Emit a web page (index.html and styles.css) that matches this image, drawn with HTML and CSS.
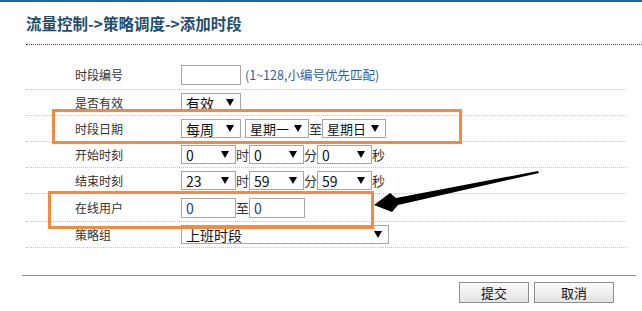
FILE: index.html
```html
<!DOCTYPE html>
<html lang="zh-CN">
<head>
    <meta charset="UTF-8">
    <title>添加时段</title>
    <link rel="stylesheet" href="styles.css">
</head>
<body>
<div class="page">
    <h1 class="title">流量控制-&gt;策略调度-&gt;添加时段</h1>

    <div class="form">
        <div class="row row_first">
            <span class="lab">时段编号</span>
            <span class="txt w60"></span>
            <span class="hint">(1~128,小编号优先匹配)</span>
        </div>
        <div class="row">
            <span class="lab">是否有效</span>
            <span class="sel w60">有效<i></i></span>
        </div>
        <div class="row">
            <span class="lab">时段日期</span>
            <span class="sel w60">每周<i></i></span>
            <span class="sel w64 ml4">星期一<i></i></span><span class="unit">至</span><span class="sel w64">星期日<i></i></span>
        </div>
        <div class="row">
            <span class="lab">开始时刻</span>
            <span class="sel w55">0<i></i></span><span class="unit">时</span><span class="sel w55">0<i></i></span><span class="unit">分</span><span class="sel w55">0<i></i></span><span class="unit">秒</span>
        </div>
        <div class="row">
            <span class="lab">结束时刻</span>
            <span class="sel w55">23<i></i></span><span class="unit">时</span><span class="sel w55">59<i></i></span><span class="unit">分</span><span class="sel w55">59<i></i></span><span class="unit">秒</span>
        </div>
        <div class="row row_user">
            <span class="lab">在线用户</span>
            <span class="txt w55">0</span><span class="unit">至</span><span class="txt w56">0</span>
        </div>
        <div class="row">
            <span class="lab">策略组</span>
            <span class="sel w208">上班时段<i></i></span>
        </div>
    </div>

    <div class="foot">
        <button class="btn btn_ok">提交</button>
        <button class="btn btn_cancel">取消</button>
    </div>

    <!-- 标注 -->
    <div class="mark mark_date"></div>
    <div class="mark mark_user"></div>
    <svg class="arrow" width="175" height="50" viewBox="0 0 175 50">
        <polygon points="168,4 26,31 20,26 4,38 22,45 28,38 169,6" fill="#000"/>
    </svg>
</div>
</body>
</html>
```

FILE: styles.css
```css
body {
    margin: 0;
    background: #fff;
    font-family: "Noto Sans CJK SC", "Liberation Sans", sans-serif;
    color: #333;
}
.page {
    position: relative;
    width: 642px;
    height: 311px;
    border-top: 2px solid #1b6b96;
    box-sizing: border-box;
}
.title {
    margin: 0 0 0 26px;
    padding: 11px 0 11px;
    height: 20px;
    line-height: 20px;
    font-size: 15.5px;
    font-weight: bold;
    color: #234d6d;
    border-bottom: 1px dotted #234d6d;
}
.form {
    margin: 15px 0 0 26px;
    width: 600px;
}
.row {
    display: flex;
    align-items: center;
    height: 26px;
    border-bottom: 1px dotted #c4c4c4;
    box-sizing: border-box;
    font-size: 13px;
}
.row_first {
    height: 30px;
}
.row_user {
    height: 28px;
}
.lab {
    width: 155px;
    padding-left: 49px;
    box-sizing: border-box;
    font-size: 12px;
    color: #333;
}
.txt, .sel {
    display: flex;
    align-items: center;
    flex-shrink: 0;
    height: 20px;
    border: 1px solid #a6a6a6;
    box-sizing: border-box;
    background: #fff;
    font-size: 14px;
    padding-left: 4px;
    color: #111;
    white-space: nowrap;
    overflow: hidden;
}
.txt {
    color: #1c3f8c;
}
.sel {
    height: 19px;
    justify-content: space-between;
}
/* 下拉三角 */
.sel i {
    width: 0;
    height: 0;
    margin-right: 6px;
    border-left: 4px solid transparent;
    border-right: 4px solid transparent;
    border-top: 7px solid #000;
}
.w55 { width: 55px; }
.w56 { width: 56px; }
.w60 { width: 60px; }
.w64 { width: 64px; font-size: 13px; }
.w208 { width: 208px; }
.ml4 { margin-left: 4px; }
.unit {
    width: 13px;
    flex-shrink: 0;
    font-size: 13px;
    color: #333;
}
.hint {
    margin-left: 4px;
    font-size: 12.5px;
    color: #2d5fa8;
    white-space: nowrap;
}
.foot {
    display: flex;
    justify-content: flex-end;
    gap: 5px;
    margin: 27px 0 0 22px;
    width: 614px;
    padding: 6px 22px 0 0;
    border-top: 1px solid #8c8c8c;
    box-sizing: border-box;
}
.btn {
    height: 21px;
    padding: 0;
    border: 1px solid #8e8e8e;
    background: linear-gradient(#fbfbfb, #e3e3e3);
    font-family: "Noto Sans CJK SC", sans-serif;
    font-size: 13px;
    color: #111;
}
.btn_ok { width: 70px; }
.btn_cancel { width: 80px; }
.mark {
    position: absolute;
    border: 3px solid #f58a3c;
    box-sizing: border-box;
}
.mark_date {
    left: 52px;
    top: 107px;
    width: 410px;
    height: 35px;
}
.mark_user {
    left: 48px;
    top: 189px;
    width: 326px;
    height: 38px;
}
.arrow {
    position: absolute;
    left: 370px;
    top: 165px;
}
```
